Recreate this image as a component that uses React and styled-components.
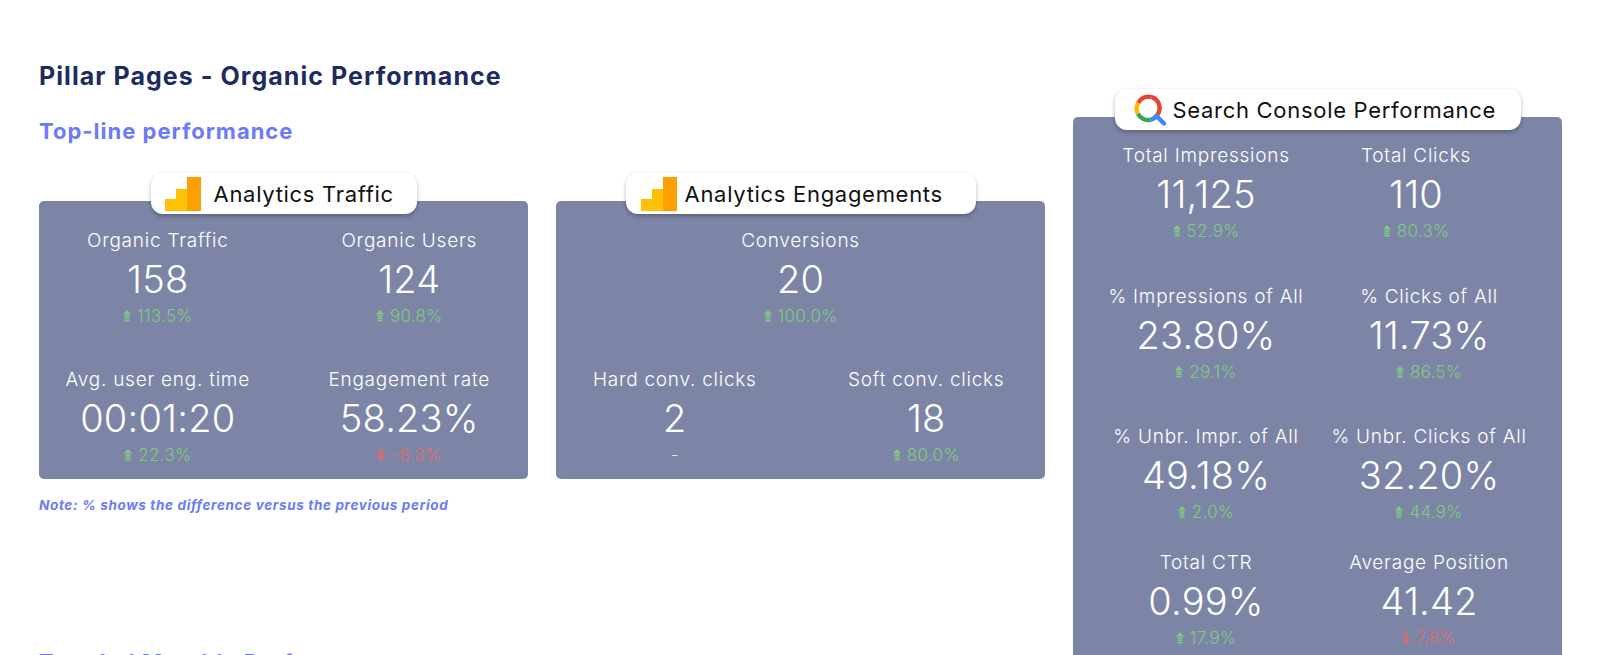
import React from "react";
import styled, { createGlobalStyle } from "styled-components";

const GlobalStyle = createGlobalStyle`
  html, body { margin: 0; padding: 0; background: #ffffff; }
  body { font-family: "Inter", "Open Sans", sans-serif; overflow: hidden; }
`;

const Page = styled.div`
  display: flex;
  gap: 28px;
  padding-left: 39px;
  height: 655px;
  overflow: hidden;
`;

const LeftColumn = styled.div`
  width: 1006px;
  display: flex;
  flex-direction: column;
`;

const RightColumn = styled.div`
  width: 489px;
  padding-top: 89px;
  display: flex;
  flex-direction: column;
  align-items: center;
`;

const Title = styled.h1`
  margin: 61px 0 0;
  font-size: 25px;
  line-height: 30px;
  font-weight: 700;
  color: #1d2b5e;
  letter-spacing: 1.05px;
`;

const Subtitle = styled.h2`
  margin: ${(p) => p.$mt}px 0 0;
  font-size: 22px;
  line-height: 26px;
  font-weight: 700;
  color: #6b7bf5;
  letter-spacing: 1px;
`;

const PanelRow = styled.div`
  display: flex;
  gap: 28px;
  margin-top: 29px;
`;

const Panel = styled.section`
  width: 489px;
  display: flex;
  flex-direction: column;
  align-items: center;
`;

const Pill = styled.div`
  position: relative;
  z-index: 1;
  width: ${(p) => p.$w}px;
  height: 41px;
  box-sizing: border-box;
  padding-left: ${(p) => p.$pl}px;
  display: flex;
  align-items: center;
  gap: ${(p) => p.$gap}px;
  background: #ffffff;
  border-radius: 12px;
  box-shadow: 0 2px 4px rgba(0, 0, 0, 0.28);
  font-size: 22px;
  font-weight: 400;
  letter-spacing: 0.7px;
  color: #111;
  white-space: nowrap;
`;

const Card = styled.div`
  width: 100%;
  height: ${(p) => p.$h}px;
  margin-top: -13px;
  box-sizing: border-box;
  background: #7d85a6;
  border-radius: 5px;
  padding: ${(p) => p.$pt}px ${(p) => p.$px}px 0;
  display: grid;
  grid-template-columns: 1fr 1fr;
  grid-template-rows: ${(p) => p.$rows};
  column-gap: ${(p) => p.$cg}px;
`;

const Score = styled.div`
  display: flex;
  flex-direction: column;
  align-items: center;
  grid-column: ${(p) => (p.$span ? "1 / span 2" : "auto")};
  margin-right: ${(p) => p.$offset || 0}px;
  white-space: nowrap;
  color: #ffffff;
`;

const Label = styled.div`
  font-size: 19px;
  line-height: 26px;
  font-weight: 300;
  letter-spacing: 0.75px;
`;

const Value = styled.div`
  font-size: 38px;
  line-height: 50px;
  font-weight: 300;
  letter-spacing: 0.2px;
`;

const Change = styled.div`
  display: flex;
  align-items: center;
  gap: 6px;
  height: 24px;
  font-size: 17px;
  font-weight: 300;
  letter-spacing: 0.3px;
  color: ${(p) => (p.$tone === "bad" ? "#e26a6a" : p.$tone === "none" ? "#e4e6ee" : "#7fcb7f")};
`;

const Note = styled.p`
  margin: 18px 0 0;
  font-size: 13.5px;
  line-height: 16px;
  font-weight: 700;
  font-style: italic;
  letter-spacing: 0.65px;
  color: #6b7bf5;
`;

const Arrow = ({ dir }) => (
  <svg width="8" height="12" viewBox="0 0 8 12" style={{ transform: dir === "down" ? "scaleY(-1)" : "none" }}>
    <path d="M4 0 L8 4.6 H0 Z" fill="currentColor" />
    <rect x="1.5" y="5.3" width="5" height="1.6" fill="currentColor" />
    <rect x="1.5" y="7.6" width="5" height="1.6" fill="currentColor" />
    <rect x="1.5" y="9.9" width="5" height="1.6" fill="currentColor" />
  </svg>
);

const AnalyticsIcon = () => (
  <svg width="36" height="34" viewBox="0 0 36 34">
    <rect x="0" y="22" width="11" height="12" fill="#ffc107" />
    <rect x="11" y="12" width="11" height="22" fill="#ffc107" />
    <rect x="22" y="0" width="14" height="34" fill="#ffa000" />
  </svg>
);

const SearchIcon = () => (
  <svg width="34" height="34" viewBox="0 0 34 34" fill="none">
    <path d="M18.8 4.2 A11.3 11.3 0 0 1 24.6 21.4" stroke="#ea4335" strokeWidth="4.4" />
    <path d="M5.2 9.9 A11.3 11.3 0 0 1 18.8 4.2" stroke="#ea4335" strokeWidth="4.4" />
    <path d="M5.2 9.9 A11.3 11.3 0 0 0 4.9 20.6" stroke="#fbbc05" strokeWidth="4.4" />
    <path d="M4.9 20.6 A11.3 11.3 0 0 0 17.4 26.8" stroke="#34a853" strokeWidth="4.4" />
    <path d="M17.4 26.8 A11.3 11.3 0 0 0 24.6 21.4" stroke="#4285f4" strokeWidth="4.4" />
    <path d="M23.5 23 L31 30.5" stroke="#4285f4" strokeWidth="4.4" strokeLinecap="round" />
  </svg>
);

const Metric = ({ label, value, change, tone = "good", dir = "up", span, offset }) => (
  <Score $span={span} $offset={offset}>
    <Label>{label}</Label>
    <Value>{value}</Value>
    <Change $tone={tone}>
      {tone !== "none" && <Arrow dir={dir} />}
      <span>{change}</span>
    </Change>
  </Score>
);

export default function App() {
  return (
    <>
      <GlobalStyle />
      <Page>
        <LeftColumn>
          <Title>Pillar Pages - Organic Performance</Title>
          <Subtitle $mt={27}>Top-line performance</Subtitle>
          <PanelRow>
            <Panel>
              <Pill $w={266} $pl={14} $gap={13}>
                <AnalyticsIcon />
                Analytics Traffic
              </Pill>
              <Card $h={278} $pt={27} $px={0} $cg={14} $rows="139px 100px">
                <Metric label="Organic Traffic" value="158" change="113.5%" />
                <Metric label="Organic Users" value="124" change="90.8%" />
                <Metric label="Avg. user eng. time" value="00:01:20" change="22.3%" />
                <Metric label="Engagement rate" value="58.23%" change="-8.3%" tone="bad" dir="down" />
              </Card>
            </Panel>
            <Panel>
              <Pill $w={350} $pl={15} $gap={8}>
                <AnalyticsIcon />
                Analytics Engagements
              </Pill>
              <Card $h={278} $pt={27} $px={0} $cg={14} $rows="139px 100px">
                <Metric span label="Conversions" value="20" change="100.0%" />
                <Metric label="Hard conv. clicks" value="2" change="-" tone="none" />
                <Metric label="Soft conv. clicks" value="18" change="80.0%" />
              </Card>
            </Panel>
          </PanelRow>
          <Note>Note: % shows the difference versus the previous period</Note>
          <Subtitle $mt={136}>Trended Monthly Performance</Subtitle>
        </LeftColumn>
        <RightColumn>
          <Panel>
            <Pill $w={406} $pl={18} $gap={6}>
              <SearchIcon />
              Search Console Performance
            </Pill>
            <Card $h={560} $pt={26} $px={33} $cg={23} $rows="141px 140px 126px 100px">
              <Metric label="Total Impressions" value="11,125" change="52.9%" />
              <Metric label="Total Clicks" value="110" change="80.3%" offset={26} />
              <Metric label="% Impressions of All" value="23.80%" change="29.1%" />
              <Metric label="% Clicks of All" value="11.73%" change="86.5%" />
              <Metric label="% Unbr. Impr. of All" value="49.18%" change="2.0%" />
              <Metric label="% Unbr. Clicks of All" value="32.20%" change="44.9%" />
              <Metric label="Total CTR" value="0.99%" change="17.9%" />
              <Metric label="Average Position" value="41.42" change="7.8%" tone="bad" />
            </Card>
          </Panel>
        </RightColumn>
      </Page>
    </>
  );
}
